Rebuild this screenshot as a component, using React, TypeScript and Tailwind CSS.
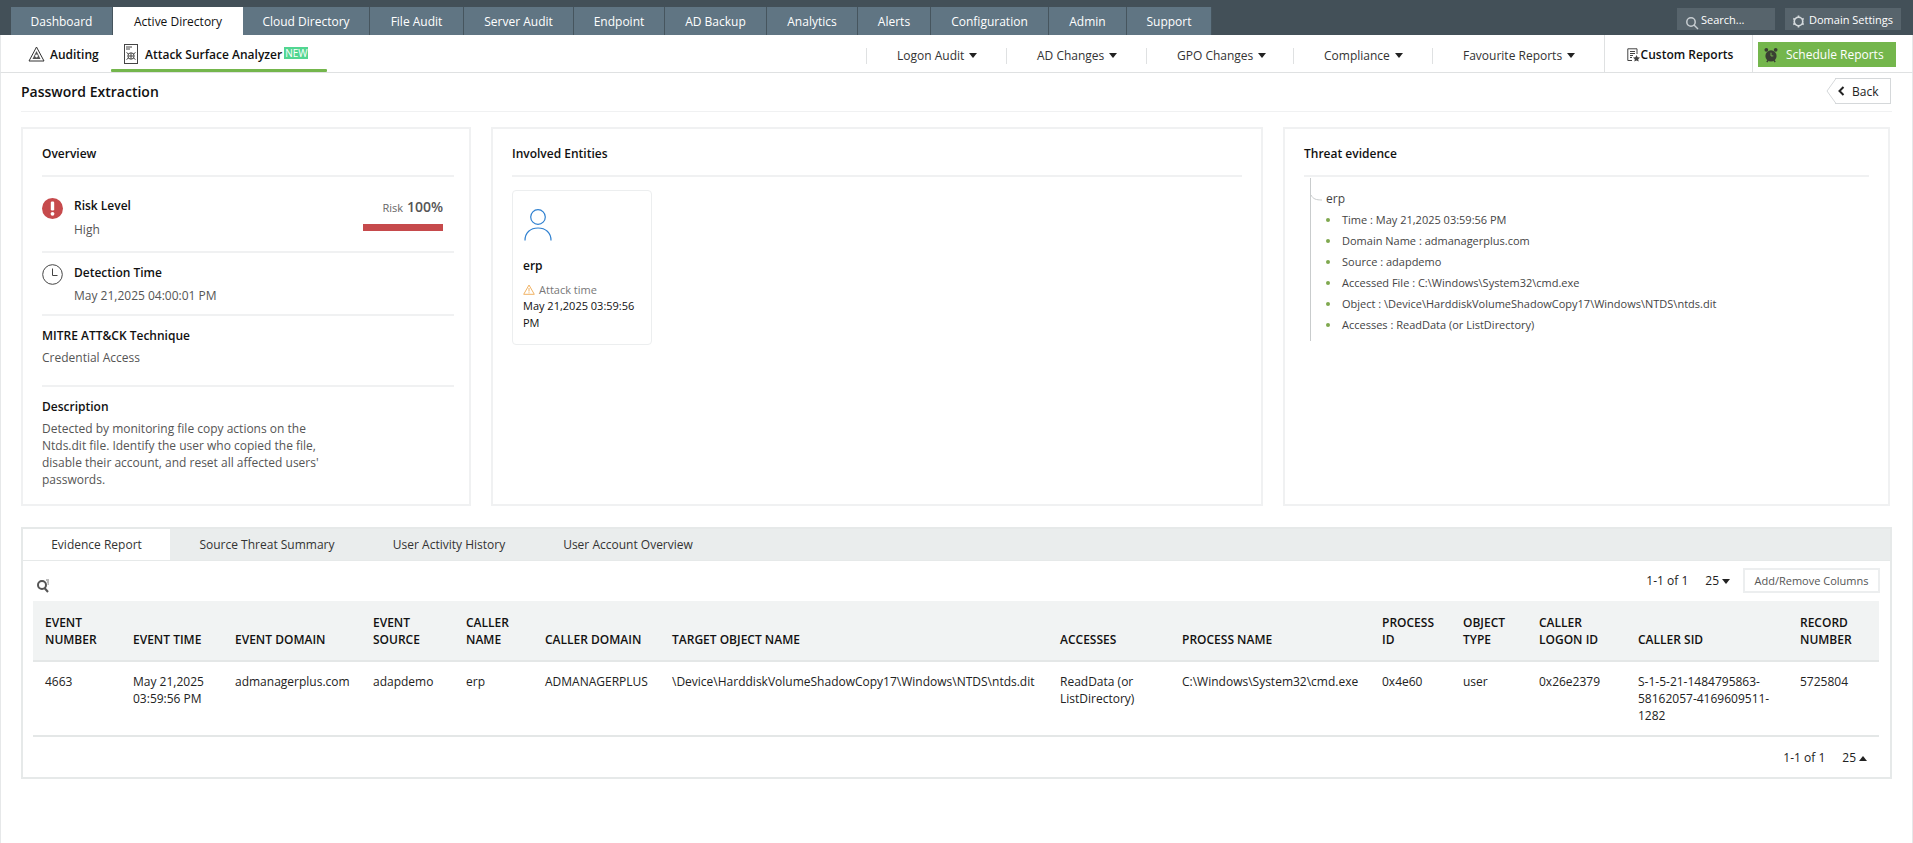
import React from "react";

const Caret = ({ up = false, gap = 5 }: { up?: boolean; gap?: number }) => (
  <svg width="8" height="5" viewBox="0 0 8 5" className="inline-block align-middle" style={{ marginLeft: gap }}>
    <path d={up ? "M0 5 L4 0 L8 5 Z" : "M0 0 L8 0 L4 5 Z"} fill="#222" />
  </svg>
);

const topTabs: [string, number][] = [
  ["Dashboard", 102],
  ["Active Directory", 130],
  ["Cloud Directory", 127],
  ["File Audit", 94],
  ["Server Audit", 110],
  ["Endpoint", 91],
  ["AD Backup", 102],
  ["Analytics", 91],
  ["Alerts", 73],
  ["Configuration", 118],
  ["Admin", 78],
  ["Support", 85],
];

const subMenus: [string, number][] = [
  ["Logon Audit", 140],
  ["AD Changes", 140],
  ["GPO Changes", 147],
  ["Compliance", 139],
  ["Favourite Reports", 172],
];

const cols = [88, 102, 138, 93, 79, 127, 388, 122, 200, 81, 76, 99, 162, 91];
const headers = [
  "EVENT NUMBER",
  "EVENT TIME",
  "EVENT DOMAIN",
  "EVENT SOURCE",
  "CALLER NAME",
  "CALLER DOMAIN",
  "TARGET OBJECT NAME",
  "ACCESSES",
  "PROCESS NAME",
  "PROCESS ID",
  "OBJECT TYPE",
  "CALLER LOGON ID",
  "CALLER SID",
  "RECORD NUMBER",
];
const row = [
  "4663",
  "May 21,2025 03:59:56 PM",
  "admanagerplus.com",
  "adapdemo",
  "erp",
  "ADMANAGERPLUS",
  "\\Device\\HarddiskVolumeShadowCopy17\\Windows\\NTDS\\ntds.dit",
  "ReadData (or ListDirectory)",
  "C:\\Windows\\System32\\cmd.exe",
  "0x4e60",
  "user",
  "0x26e2379",
  "S-1-5-21-1484795863-58162057-4169609511-1282",
  "5725804",
];
const evidence = [
  "Time : May 21,2025 03:59:56 PM",
  "Domain Name : admanagerplus.com",
  "Source : adapdemo",
  "Accessed File : C:\\Windows\\System32\\cmd.exe",
  "Object : \\Device\\HarddiskVolumeShadowCopy17\\Windows\\NTDS\\ntds.dit",
  "Accesses : ReadData (or ListDirectory)",
];

export default function App() {
  return (
    <div className="w-[1913px] h-[843px] overflow-hidden bg-white text-[12px] leading-[17px] text-[#222]" style={{ fontFamily: '"Open Sans", sans-serif' }}>
      {/* Top bar */}
      <div className="h-[35px] bg-[#435058] flex items-end pl-[11px] pr-[12px]">
        <div className="flex h-[28px]">
          {topTabs.map(([t, w], i) => (
            <div
              key={t}
              className={
                "h-full flex items-center justify-center " +
                (i === 1 ? "bg-white text-[#111] " : "bg-[#607583] text-white border-r border-[#46555e] ")
              }
              style={{ width: w }}
            >
              {t}
            </div>
          ))}
        </div>
        <div className="ml-auto flex self-start mt-[8px] gap-[10px] text-[11px] text-white">
          <div className="w-[98px] h-[22px] bg-[#57646c] flex items-center pl-[8px] gap-[2px]">
            <svg width="14" height="14" viewBox="0 0 14 14" className="mt-[8px]" fill="none" stroke="#c8ced2" strokeWidth="1.5">
              <circle cx="6" cy="6" r="4.2" />
              <path d="M9 9 L13 13" />
            </svg>
            <span>Search...</span>
          </div>
          <div className="w-[116px] h-[22px] bg-[#57646c] flex items-center pl-[7px] gap-[4px] whitespace-nowrap">
            <svg width="13" height="13" viewBox="0 0 14 14" className="mt-[4px]" fill="none" stroke="#d5dadd" strokeWidth="1.8">
              <circle cx="7" cy="7" r="4.6" />
              <path d="M7 0.5 V2.5 M7 11.5 V13.5 M1.4 3.8 L3.1 4.8 M10.9 9.2 L12.6 10.2 M1.4 10.2 L3.1 9.2 M10.9 4.8 L12.6 3.8" />
            </svg>
            <span>Domain Settings</span>
          </div>
        </div>
      </div>

      {/* Sub nav */}
      <div className="h-[38px] border-b border-[#dfe1e2] flex items-stretch border-x border-x-[#e6e8e9] pr-[16px]">
        <div className="flex items-stretch ml-[27px] font-semibold text-[#111]">
          <div className="flex items-center gap-[5px] pt-[1px] w-[83px]">
            <svg width="17" height="16" viewBox="0 0 17 16" fill="none" stroke="#333" strokeWidth="1">
              <path d="M8.5 1 L16 15 H1 Z" />
              <path d="M8.5 5 L12.5 13 H4.5 Z" fill="#555" stroke="none" />
              <circle cx="8.5" cy="10" r="1.4" fill="#fff" stroke="none" />
            </svg>
            Auditing
          </div>
          <div className="relative flex items-center pl-[13px] w-[216px] gap-[7px] pt-[1px]">
            <svg width="14" height="20" viewBox="0 0 14 20" fill="none" stroke="#444" strokeWidth="1">
              <rect x="0.5" y="0.5" width="13" height="19" />
              <path d="M2 3 H8 M2 5 H6" />
              <circle cx="7" cy="12" r="3.2" />
              <path d="M7 9 V15 M4 12 H10 M2.5 8.5 L4.5 10 M11.5 8.5 L9.5 10 M2.5 15.5 L4.5 14 M11.5 15.5 L9.5 14" />
            </svg>
            <span className="whitespace-nowrap">Attack Surface Analyzer</span>
            <span className="-ml-[5px] -mt-[3px] bg-[#52d691] text-white text-[10px] leading-[12px] px-[1px] font-normal">NEW</span>
            <div className="absolute left-0 right-0 bottom-0 h-[3px] bg-[#74b64c] rounded-[1px]" />
          </div>
        </div>
        <div className="ml-auto flex items-stretch">
          <div className="flex items-center text-[#333] pt-[4px]">
            {subMenus.map(([t, w]) => (
              <div key={t} className="h-[16px] flex items-center pl-[30px] border-l border-[#dfe1e2]" style={{ width: w }}>
                {t}
                <Caret />
              </div>
            ))}
          </div>
          <div className="w-[148px] border-l border-[#dfe1e2] flex items-center justify-center gap-[1px] font-semibold text-[#111] pt-[2px] pl-[3px]">
            <svg width="13" height="14" viewBox="0 0 13 14" fill="none" stroke="#444" strokeWidth="1">
              <path d="M10 6 V0.8 H0.8 V12.5 H5" />
              <path d="M3 3.5 H8 M3 5.5 H8 M3 7.5 H6 M3 9.5 H5" />
              <path d="M9.5 7 L10.6 9.2 L13 9.5 L11.2 11.2 L11.7 13.6 L9.5 12.4 L7.3 13.6 L7.8 11.2 L6 9.5 L8.4 9.2 Z" fill="#444" stroke="none" />
            </svg>
            Custom Reports
          </div>
          <div className="border-l border-[#dfe1e2] pl-[5px] pt-[7px]">
            <div className="w-[138px] h-[25px] bg-[#74b64c] text-white flex items-center pl-[6px] gap-[8px]">
              <svg width="14" height="16" viewBox="0 0 15 17">
                <circle cx="7.5" cy="9.5" r="6" fill="#3a3f33" />
                <circle cx="2.5" cy="3" r="2" fill="#3a3f33" />
                <circle cx="12.5" cy="3" r="2" fill="#3a3f33" />
                <path d="M3 16 L4.5 14 M12 16 L10.5 14" stroke="#3a3f33" strokeWidth="1.5" />
                <path d="M7.5 6 V9.5 H10" stroke="#74b64c" strokeWidth="1" fill="none" />
              </svg>
              Schedule Reports
            </div>
          </div>
        </div>
      </div>

      {/* Main */}
      <div className="border-x border-[#e6e8e9] h-[770px] pl-[20px] pr-[20px]">
        {/* Title */}
        <div className="h-[39px] border-b border-[#f0f1f2] flex items-center justify-between">
          <div className="text-[14px] font-semibold text-[#111] -mt-[1px]">Password Extraction</div>
          <div className="relative w-[56px] h-[26px] -mt-[2px] border border-[#d5d8da] border-l-0 flex items-center pl-[3px] gap-[7px] text-[#222] mr-[1px]">
            <svg className="absolute -left-[9px] -top-[1px]" width="10" height="26" viewBox="0 0 10 26" fill="none">
              <path d="M10 0.5 L1 13 L10 25.5" stroke="#d5d8da" />
            </svg>
            <svg width="7" height="10" viewBox="0 0 7 10" fill="none" stroke="#222" strokeWidth="2">
              <path d="M5.5 1 L1.5 5 L5.5 9" />
            </svg>
            Back
          </div>
        </div>

        {/* Cards */}
        <div className="flex mt-[15px] h-[379px] gap-[20px]">
          {/* Overview */}
          <div className="w-[450px] border-2 border-[#f0f1f2] pl-[19px] pr-[15px] flex flex-col">
            <div className="h-[48px] flex items-center font-semibold text-[#111] border-b-2 border-[#f0f1f2] shrink-0 pt-[2px]">Overview</div>
            <div className="h-[76px] border-b-2 border-[#f0f1f2] flex pt-[21px] relative">
              <svg width="21" height="21" viewBox="0 0 21 21" className="shrink-0">
                <circle cx="10.5" cy="10.5" r="10.5" fill="#c64a4c" />
                <rect x="8.8" y="3.5" width="3.4" height="9" rx="1.2" fill="#fff" />
                <circle cx="10.5" cy="15.8" r="1.9" fill="#fff" />
              </svg>
              <div className="ml-[11px] -mt-[1px]">
                <div className="font-semibold text-[#111]">Risk Level</div>
                <div className="mt-[7px] text-[#555]">High</div>
              </div>
              <div className="ml-auto mr-[11px] w-[80px] flex flex-col items-end">
                <div className="whitespace-nowrap text-[#666] text-[11px] leading-[17px]">
                  Risk <span className="text-[14px] font-semibold text-[#555] ml-[1px]">100%</span>
                </div>
                <div className="h-[7px] w-[80px] bg-[#c64a4c] mt-[8px]" />
              </div>
            </div>
            <div className="h-[63px] border-b-2 border-[#f0f1f2] flex pt-[11px]">
              <svg width="21" height="21" viewBox="0 0 21 21" className="shrink-0" fill="none" stroke="#444" strokeWidth="1">
                <circle cx="10.5" cy="10.5" r="9.8" />
                <path d="M10.5 4.5 V11.5 H15.5" />
              </svg>
              <div className="ml-[11px]">
                <div className="font-semibold text-[#111]">Detection Time</div>
                <div className="mt-[6px] text-[#555]">May 21,2025 04:00:01 PM</div>
              </div>
            </div>
            <div className="h-[71px] border-b-2 border-[#f0f1f2] pt-[11px]">
              <div className="font-semibold text-[#111]">MITRE ATT&amp;CK Technique</div>
              <div className="mt-[5px] text-[#555]">Credential Access</div>
            </div>
            <div className="pt-[11px]">
              <div className="font-semibold text-[#111]">Description</div>
              <div className="mt-[5px] w-[285px] text-[#555]">
                Detected by monitoring file copy actions on the Ntds.dit file. Identify the user who copied the file, disable their account, and reset all affected users' passwords.
              </div>
            </div>
          </div>

          {/* Involved */}
          <div className="w-[772px] border-2 border-[#f0f1f2] pl-[19px] pr-[19px]">
            <div className="h-[48px] flex items-center font-semibold text-[#111] border-b-2 border-[#f0f1f2] pt-[2px]">Involved Entities</div>
            <div className="mt-[13px] w-[140px] h-[155px] border border-[#eceeef] rounded-[4px] pl-[10px] pr-[12px] pt-[18px]">
              <svg width="28" height="32" viewBox="0 0 28 32" fill="none" stroke="#2f80d0" strokeWidth="1.2" className="ml-[1px]">
                <circle cx="14" cy="8" r="7.3" />
                <path d="M1 31.5 C1 23.5 6.5 19 14 19 C21.5 19 27 23.5 27 31.5" />
              </svg>
              <div className="mt-[16px] font-semibold text-[#111]">erp</div>
              <div className="mt-[7px] flex items-center gap-[4px] text-[#777] text-[11px]">
                <svg width="12" height="11" viewBox="0 0 12 11" fill="none" stroke="#f0b264" strokeWidth="1">
                  <path d="M6 1 L11.3 10.3 H0.7 Z" />
                  <path d="M6 4 V7.5 M6 8.3 V9.3" />
                </svg>
                Attack time
              </div>
              <div className="text-[#111] text-[11px] leading-[16.5px]">May 21,2025 03:59:56 PM</div>
            </div>
          </div>

          {/* Threat */}
          <div className="w-[607px] border-2 border-[#f0f1f2] pl-[19px] pr-[19px]">
            <div className="h-[48px] flex items-center font-semibold text-[#111] border-b-2 border-[#f0f1f2] pt-[2px]">Threat evidence</div>
            <div className="ml-[6px] mt-[1px] h-[163px] border-l border-[#c9cccd] relative pl-[15px] pt-[12px] text-[#444]">
              <svg className="absolute left-0 top-[17px]" width="12" height="6" viewBox="0 0 12 6" fill="none" stroke="#c9cccd">
                <path d="M0 0 C2 4 5 5 11 5" />
              </svg>
              <div className="leading-[17px]">erp</div>
              <div className="mt-[4px] flex flex-col gap-[4px]">
                {evidence.map((e) => (
                  <div key={e} className="flex items-center h-[17px] text-[11px] whitespace-nowrap">
                    <span className="w-[4px] h-[4px] rounded-full bg-[#7fa84f] mr-[12px]" />
                    {e}
                  </div>
                ))}
              </div>
            </div>
          </div>
        </div>

        {/* Tabs panel */}
        <div className="mt-[21px] h-[252px] border-2 border-[#e6e9e9] flex flex-col">
          <div className="h-[31px] bg-[#eaeded] flex shrink-0 text-[#333]">
            <div className="w-[147px] bg-white flex items-center justify-center pb-[1px]">Evidence Report</div>
            <div className="w-[194px] flex items-center justify-center pb-[1px]">Source Threat Summary</div>
            <div className="w-[170px] flex items-center justify-center pb-[1px]">User Activity History</div>
            <div className="w-[188px] flex items-center justify-center pb-[1px]">User Account Overview</div>
          </div>
          <div className="border-t border-[#e6e9e9] flex-1 px-[10px] flex flex-col">
            <div className="h-[40px] flex items-center shrink-0">
              <svg width="15" height="15" viewBox="0 0 15 15" fill="none" stroke="#555" strokeWidth="2" className="ml-[3px] mt-[8px]">
                <circle cx="6" cy="7" r="4" />
                <path d="M8.5 10 L12 14" />
                <path d="M10 2 H13 M11 4 H13 M11.5 6 H13" strokeWidth="0.8" />
              </svg>
              <div className="ml-auto flex items-center text-[#222] -mt-[2px]">
                <span>1-1 of 1</span>
                <span className="ml-[17px]">25<Caret gap={3} /></span>
                <div className="ml-[13px] w-[137px] h-[25px] border-2 border-[#eceeef] flex items-center justify-center text-[11px] text-[#555]">Add/Remove Columns</div>
              </div>
            </div>
            <table className="table-fixed w-[1846px] border-collapse">
              <colgroup>
                {cols.map((w, i) => (
                  <col key={i} style={{ width: w }} />
                ))}
              </colgroup>
              <thead>
                <tr className="bg-[#f1f3f3] h-[60px] border-b-2 border-[#e4e7e7]">
                  {headers.map((h) => (
                    <th key={h} className="pl-[12px] pr-[8px] pb-[12px] align-bottom text-left font-semibold text-[#111]">{h}</th>
                  ))}
                </tr>
              </thead>
              <tbody>
                <tr className="h-[75px] border-b-2 border-[#e4e7e7]">
                  {row.map((c, i) => (
                    <td key={i} className="pl-[12px] pr-[8px] pt-[11px] align-top text-[#222] break-words">{c}</td>
                  ))}
                </tr>
              </tbody>
            </table>
            <div className="flex-1 flex items-center justify-end text-[#222] pr-[13px]">
              <span>1-1 of 1</span>
              <span className="ml-[17px]">25<Caret up gap={3} /></span>
            </div>
          </div>
        </div>
      </div>
    </div>
  );
}
